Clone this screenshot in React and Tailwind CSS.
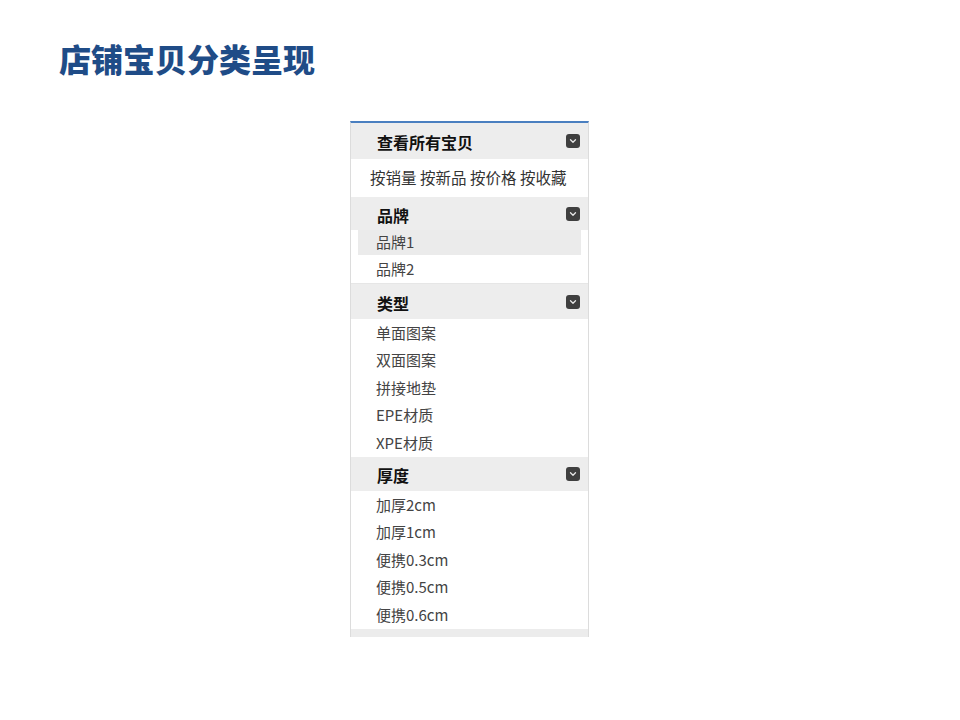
import React from "react";

const Chev = () => (
  <span className="flex h-[14px] w-[14px] items-center justify-center rounded-[3px] bg-[#3f3f3f]">
    <svg width="10" height="10" viewBox="0 0 10 10" fill="none">
      <path d="M2.5 3.8 L5 6.2 L7.5 3.8" stroke="#e8e8e8" strokeWidth="1.3" strokeLinecap="round" strokeLinejoin="round" />
    </svg>
  </span>
);

const Header = ({ title, h }) => (
  <div className={`flex items-center justify-between bg-[#ededed] pl-[26px] pr-[8px] ${h}`}>
    <span className="pt-[2px] text-[16px] font-bold text-[#111]">{title}</span>
    <Chev />
  </div>
);

const Item = ({ children }) => (
  <div className="flex h-[27.6px] items-center pl-[25px] text-[15px] text-[#444]">
    {children}
  </div>
);

export default function App() {
  const font = { fontFamily: '"Noto Sans CJK SC", "Open Sans", sans-serif' };
  return (
    <div className="relative h-[720px] w-[960px] bg-white" style={font}>
      <div className="pl-[59px] pt-[32px]">
        <h1 className="text-[32px] font-black leading-[52px] text-[#1f4c87]">店铺宝贝分类呈现</h1>
      </div>
      <div className="ml-[350px] mt-[37px] w-[239px] border-x border-[#dcdcdc] border-t-2 border-t-[#4a7fc0]">
        <Header title="查看所有宝贝" h="h-[36px]" />
        <div className="flex h-[38px] items-center pl-[19px] text-[15.5px] text-[#333]">
          按销量 按新品 按价格 按收藏
        </div>
        <Header title="品牌" h="h-[33px]" />
        <div className="mx-[7px] flex h-[25px] items-center bg-[#ebebeb] pl-[18px] text-[15px] text-[#444]">品牌1</div>
        <div className="flex h-[28px] items-center pl-[25px] text-[15px] text-[#444]">品牌2</div>
        <div className="h-px bg-[#e6e6e6]" />
        <Header title="类型" h="h-[35px]" />
        <Item>单面图案</Item>
        <Item>双面图案</Item>
        <Item>拼接地垫</Item>
        <Item>EPE材质</Item>
        <Item>XPE材质</Item>
        <Header title="厚度" h="h-[34px]" />
        <Item>加厚2cm</Item>
        <Item>加厚1cm</Item>
        <Item>便携0.3cm</Item>
        <Item>便携0.5cm</Item>
        <Item>便携0.6cm</Item>
        <div className="h-[8px] bg-[#ececec]" />
      </div>
    </div>
  );
}
